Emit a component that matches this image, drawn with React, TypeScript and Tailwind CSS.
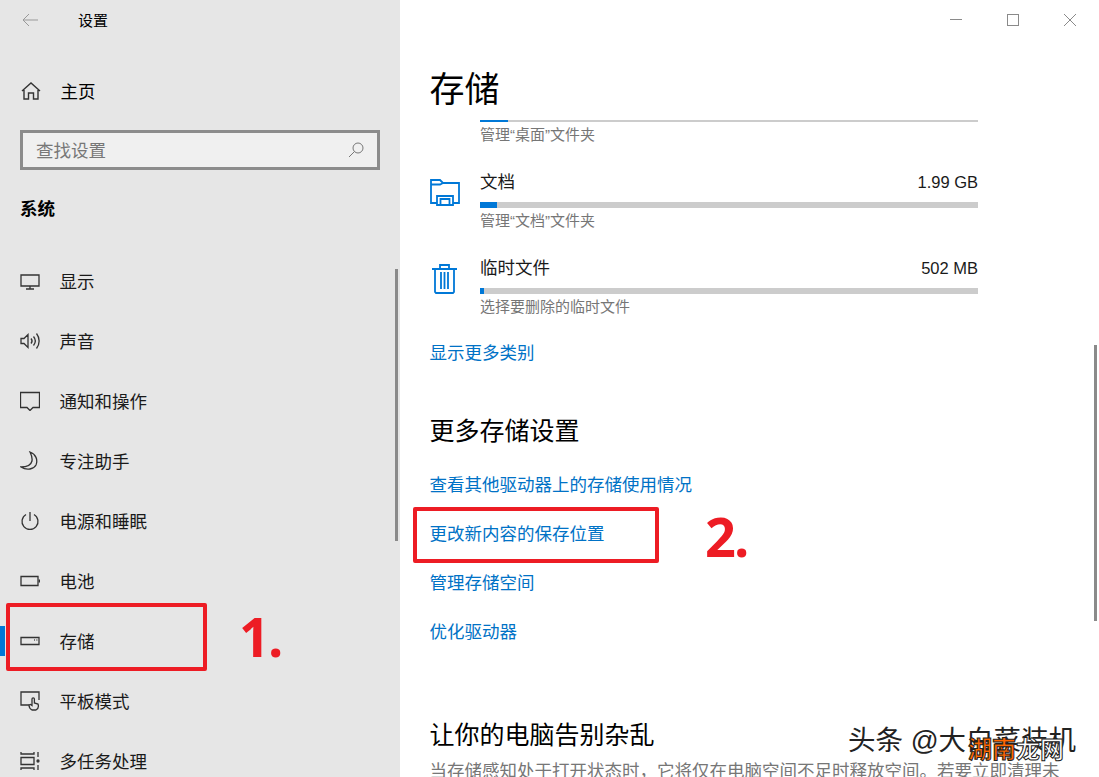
import { ReactNode } from "react";

const fontStack = "font-['Liberation_Sans','Noto_Sans_CJK_SC',sans-serif]";

const iconClass = "w-[20px] h-[20px] fill-none stroke-[#333] stroke-[1.3]";

const navItems: { label: string; icon: ReactNode }[] = [
  {
    label: "显示",
    icon: (
      <svg viewBox="0 0 20 20" className={iconClass}>
        <path d="M1 4h18v11H1zM10 15v3M6 18h8" />
      </svg>
    ),
  },
  {
    label: "声音",
    icon: (
      <svg viewBox="0 0 20 20" className={iconClass}>
        <path d="M1 7.500h3L8 3.500v13L4 12.500H1zM11 7.500c1.300 1.500 1.300 3.500 0 5M13.500 5.500c2.300 2.800 2.300 6.200 0 9M16.500 2.500c3.500 4.500 3.500 10.500 0 15" />
      </svg>
    ),
  },
  {
    label: "通知和操作",
    icon: (
      <svg viewBox="0 0 20 20" className={iconClass}>
        <path d="M.500 1.500h19v15h-6.500l-3 3-3-3H.500z" />
      </svg>
    ),
  },
  {
    label: "专注助手",
    icon: (
      <svg viewBox="0 0 20 20" className={iconClass}>
        <path d="M10 1c6 2 8 8 6 13-2 4-9 6-15 2 6 0 10-2 11-6 .500-3-.500-6-2-9z" />
      </svg>
    ),
  },
  {
    label: "电源和睡眠",
    icon: (
      <svg viewBox="0 0 20 20" className={iconClass}>
        <path d="M10 1v9M6 3.500a8 8 0 1 0 8 0" />
      </svg>
    ),
  },
  {
    label: "电池",
    icon: (
      <svg viewBox="0 0 20 20" className={iconClass}>
        <path d="M1 5.500h17v9H1zM19.500 8.500v3" />
      </svg>
    ),
  },
  {
    label: "存储",
    icon: (
      <svg viewBox="0 0 20 20" className={iconClass}>
        <path d="M1 6.500h18v7H1zM14 9h.800M16.500 9h.800" />
      </svg>
    ),
  },
  {
    label: "平板模式",
    icon: (
      <svg viewBox="0 0 20 20" className={iconClass}>
        <path d="M9 14H1V1h18v8M12 19c-2-1-3-3-3-5l1.500-.500 1.500 1V8a1.200 1.200 0 0 1 2.400 0v4l3.600 1c1 3 0 5-2 6z" />
      </svg>
    ),
  },
  {
    label: "多任务处理",
    icon: (
      <svg viewBox="0 0 20 20" className={iconClass}>
        <path d="M1 1v2h13V1M1 6.500h13v7H1zM1 19v-2h13v2M18 1v5M18 14v5" />
        <circle cx="18" cy="10" r="1" className="fill-[#333]" />
      </svg>
    ),
  },
];

const storageRows = [
  { label: "文档", size: "1.99 GB", width: "w-[17px]", hint: "管理“文档”文件夹", icon: "folder" },
  { label: "临时文件", size: "502 MB", width: "w-[4px]", hint: "选择要删除的临时文件", icon: "trash" },
];

const links = ["查看其他驱动器上的存储使用情况", "更改新内容的保存位置", "管理存储空间", "优化驱动器"];

const FolderIcon = () => (
  <svg viewBox="0 0 30 27" className="w-[30px] h-[27px] fill-none stroke-[#0078d7] stroke-[1.800]">
    <path d="M1 24V1h9l3 3h16v20h-6v-7H7v7zM1 5.500h9l3-1.500M10.500 26v-6h9v6M7 24v2h16v-2" />
  </svg>
);

const TrashIcon = () => (
  <svg viewBox="0 0 25 30" className="w-[25px] h-[30px] fill-none stroke-[#0078d7] stroke-[1.800]">
    <path d="M0 5h25M8 5V1h9v4M3 5v23l1 1h17l1-1V5M9 8v17M12.500 8v17M16 8v17" />
  </svg>
);

const App = () => {
  return (
    <div className={`relative flex w-[1099px] h-[777px] overflow-hidden bg-white ${fontStack}`}>
      {/* left nav */}
      <aside className="relative w-[400px] h-full shrink-0 bg-[#e6e6e6] overflow-hidden">
        <div className="flex items-center h-[40px] pl-[22px]">
          <svg viewBox="0 0 16 14" className="w-[16px] h-[14px] fill-none stroke-[#999] stroke-[1]">
            <path d="M7 1 1 7l6 6M1 7h15" />
          </svg>
          <span className="ml-[40px] pt-[2px] text-[15px] text-black">设置</span>
        </div>
        <div className="flex items-center h-[40px] mt-[31px] pl-[21px]">
          <svg viewBox="0 0 20 20" className="w-[20px] h-[20px] fill-none stroke-[#333] stroke-[1.400]">
            <path d="M1 10 10 2l9 8M3 9v9h4.500v-6h5v6H17V9" />
          </svg>
          <span className="ml-[19.500px] pt-[2px] text-[17.500px] text-black">主页</span>
        </div>
        <div className="flex items-center justify-between h-[40px] mx-[20px] mt-[19px] px-[13px] border-[3px] border-[#8c8c8c] bg-[#f0f0f0]">
          <span className="pt-[2px] text-[17.500px] text-[#777]">查找设置</span>
          <svg viewBox="0 0 16 16" className="w-[16px] h-[16px] fill-none stroke-[#777] stroke-[1]">
            <circle cx="10" cy="6" r="5" />
            <path d="M6.500 9.500 1 15" />
          </svg>
        </div>
        <div className="mt-[24px] pl-[20px] pt-[2px] h-[28px] flex items-center text-[17.500px] font-bold text-black">系统</div>
        <nav className="mt-[29px]">
          {navItems.map((item) => (
            <div key={item.label} className="relative flex items-center h-[60px] pl-[20px]">
              {item.label === "存储" && <span className="absolute left-0 top-[15px] w-[5px] h-[30px] bg-[#0078d7]" />}
              {item.icon}
              <span className="ml-[19.500px] pt-[2px] text-[17.500px] text-[#1a1a1a]">{item.label}</span>
            </div>
          ))}
        </nav>
        <div className="absolute left-[395px] top-[269px] w-[3px] h-[272px] bg-[#8a8a8a]" />
      </aside>

      {/* main */}
      <main className="relative flex-1 h-full overflow-hidden pl-[29.500px]">
        <div className="flex justify-end items-center h-[40px]">
          <span className="w-[12px] h-[1px] bg-[#8a8a8a] mr-[45px] -mt-[2px]" />
          <span className="w-[12px] h-[12px] border border-[#8a8a8a] mr-[45px]" />
          <svg viewBox="0 0 12 12" className="w-[12px] h-[12px] mr-[23px] stroke-[#8a8a8a] stroke-[1] fill-none">
            <path d="m0 0 12 12M12 0 0 12" />
          </svg>
        </div>
        <h1 className="mt-[24px] h-[52px] flex items-center text-[35px] text-black font-normal">存储</h1>
        <div className="w-[548.500px]">
          <div className="ml-[50.500px] mt-[4px] h-[2px] bg-[#cccccc]">
            <div className="w-[28px] h-full bg-[#0078d7]" />
          </div>
          <div className="ml-[50.500px] mt-[3px] h-[20px] flex items-center text-[15px] text-[#767676]">管理“桌面”文件夹</div>
          {storageRows.map((row) => (
            <div key={row.label} className="flex mt-[23px]">
              <div className={`w-[50.500px] shrink-0 ${row.icon === "folder" ? "pt-[11px] pl-[.5px]" : "pt-[10px] pl-[2.500px]"}`}>
                {row.icon === "folder" ? <FolderIcon /> : <TrashIcon />}
              </div>
              <div className="flex-1">
                <div className="flex justify-between items-center h-[26px] pt-[2px] text-[17.500px] text-[#1a1a1a]">
                  <span>{row.label}</span>
                  <span className="text-[16.500px]">{row.size}</span>
                </div>
                <div className="mt-[8px] h-[6px] bg-[#cccccc]">
                  <div className={`${row.width} h-full bg-[#0078d7]`} />
                </div>
                <div className="mt-[3px] h-[20px] flex items-center text-[15px] text-[#767676]">{row.hint}</div>
              </div>
            </div>
          ))}
        </div>
        <div className="mt-[23px] h-[26px] flex items-center text-[17.500px] text-[#0072c6]">显示更多类别</div>
        <h2 className="mt-[48px] h-[36px] flex items-center text-[25px] font-normal text-black">更多存储设置</h2>
        <div className="mt-[23px] flex flex-col gap-[24px]">
          {links.map((link) => (
            <div key={link} className="h-[25px] flex items-center text-[17.500px] text-[#0072c6]">{link}</div>
          ))}
        </div>
        <h2 className="mt-[73px] h-[36px] flex items-center text-[25px] font-normal text-black">让你的电脑告别杂乱</h2>
        <div className="mt-[4px] whitespace-nowrap text-[17.500px] text-[#767676]">当存储感知处于打开状态时，它将仅在电脑空间不足时释放空间。若要立即清理未</div>
        <div className="absolute right-[2px] top-[345px] w-[3px] h-[276px] bg-[#8a8a8a]" />
      </main>

      {/* annotations */}
      <div className="absolute left-[6px] top-[603px] w-[201px] h-[68px] border-[4px] border-[#ed1c24] rounded-[2px]" />
      <div className="absolute left-[413px] top-[507px] w-[246px] h-[56px] border-[4px] border-[#ed1c24] rounded-[2px]" />
      <div className="absolute left-[239px] top-[602px] text-[54px] leading-[68px] font-bold tracking-[-2px] text-[#ed1c24] font-['Open_Sans',sans-serif]">1.</div>
      <div className="absolute left-[705px] top-[502px] text-[54px] leading-[68px] font-bold tracking-[-2px] text-[#ed1c24] font-['Open_Sans',sans-serif]">2.</div>

      {/* watermark */}
      <div className="absolute left-[848px] top-[723px] text-[27.500px] leading-[36px] whitespace-nowrap text-[#222] [text-shadow:1px_1px_0_#fff]">头条 @大白菜装机</div>
      <div className="absolute left-[968px] top-[733px] text-[24px] leading-[34px] font-bold whitespace-nowrap [-webkit-text-stroke:1px_#222]">
        <span className="text-[#f60]">湖南</span>
        <span className="text-white">龙网</span>
      </div>
    </div>
  );
};

export default App;
